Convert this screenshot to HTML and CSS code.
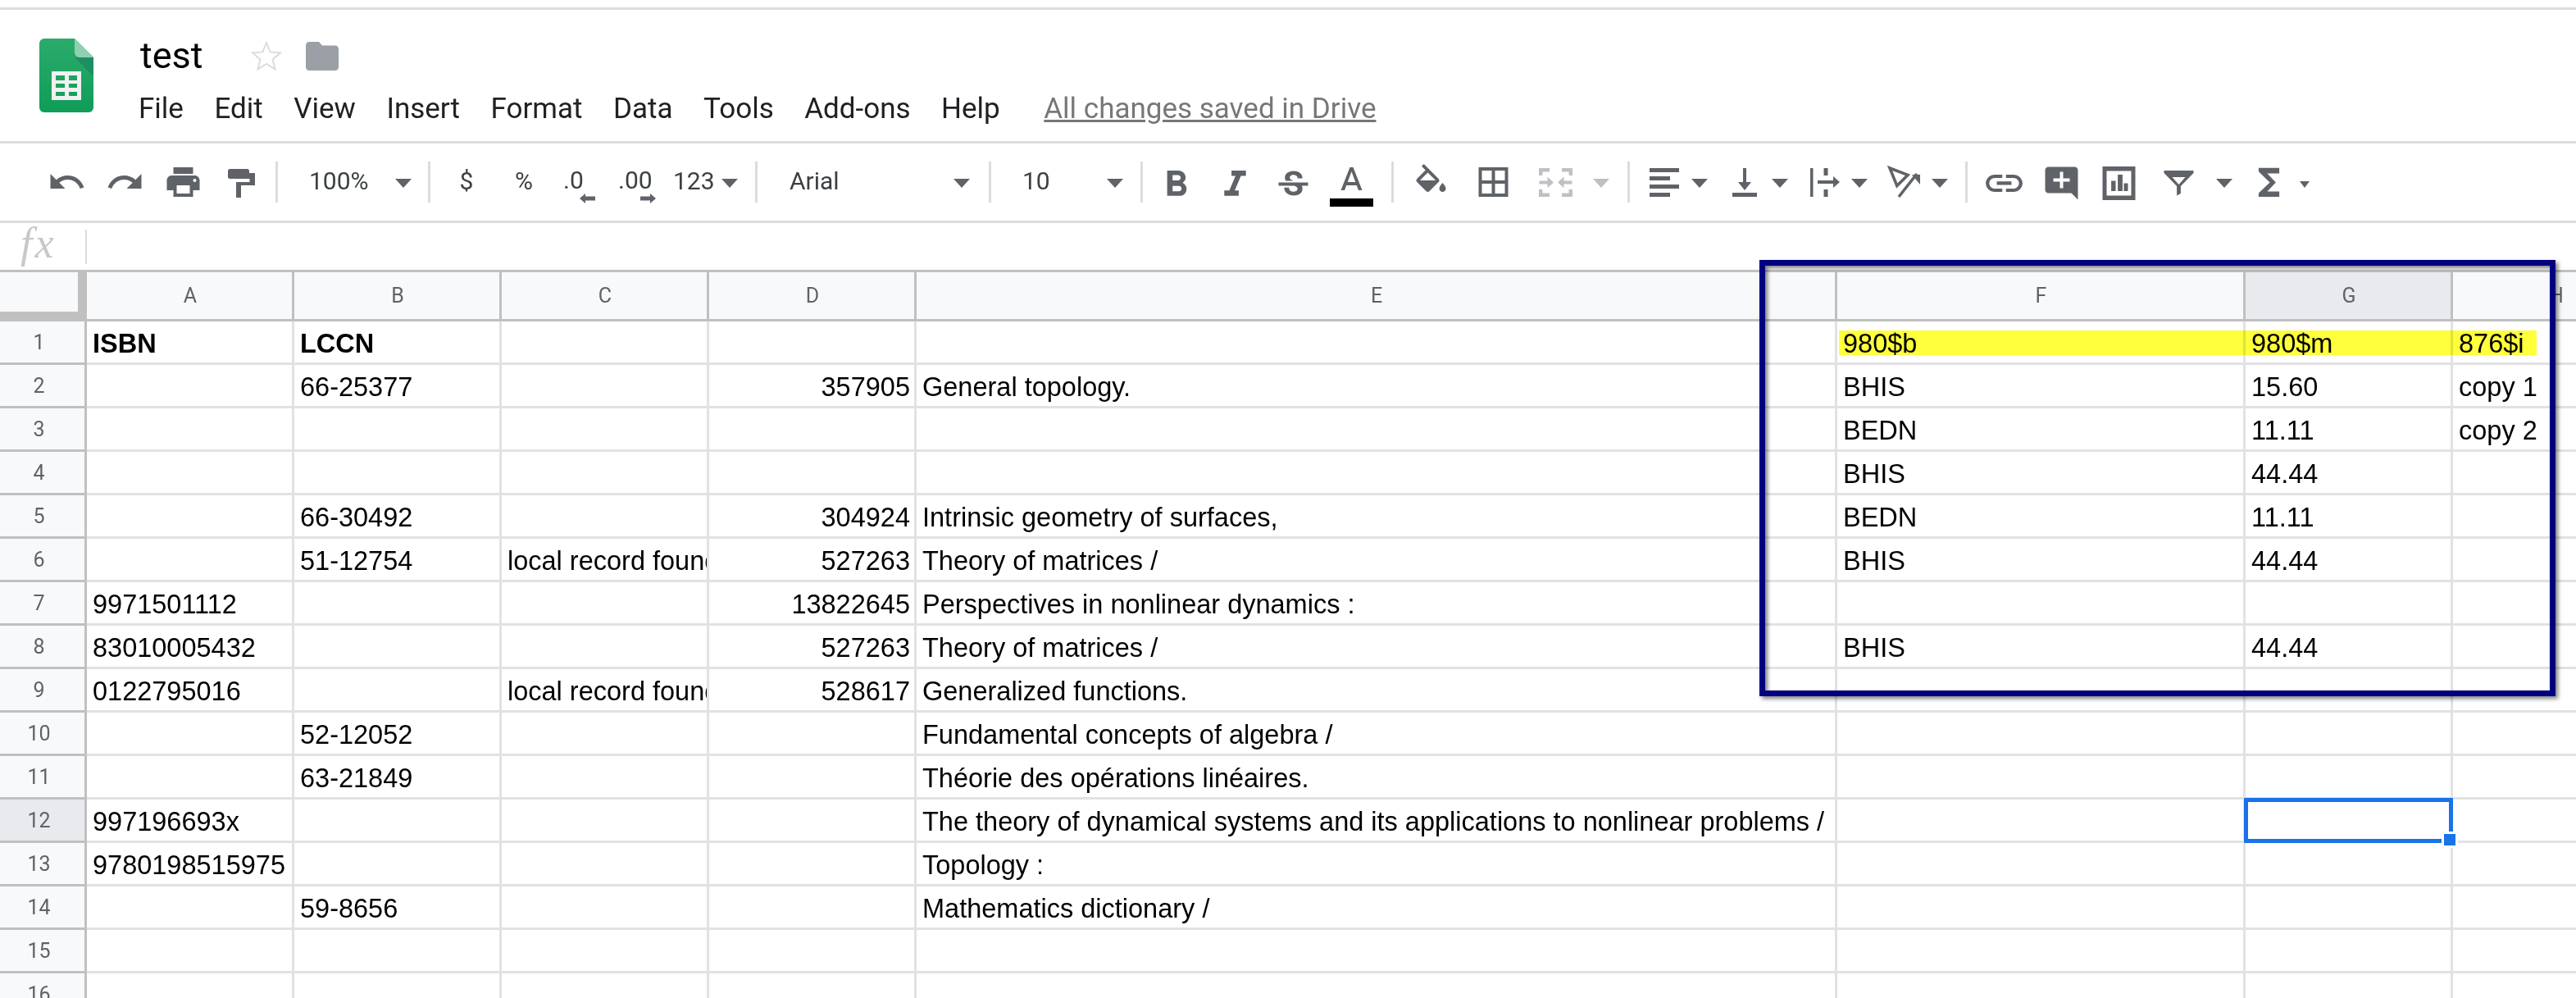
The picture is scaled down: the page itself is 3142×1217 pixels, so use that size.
FILE: index.html
```html
<!DOCTYPE html>
<html lang="en">
<head>
  <meta charset="UTF-8">
  <title>test - Google Sheets</title>
  <link rel="stylesheet" href="styles.css">
</head>
<body>
<div class="page">

  <!-- Title and menus -->
  <header class="docbar">
    <svg class="logo" viewBox="0 0 66 90">
      <defs>
        <linearGradient id="sheetBody" x1="0" y1="0" x2="0" y2="1">
          <stop offset="0" stop-color="#2bab6b"/>
          <stop offset="1" stop-color="#0f9d58"/>
        </linearGradient>
      </defs>
      <path d="M6 0h37l23 23v61a6 6 0 0 1-6 6H6a6 6 0 0 1-6-6V6a6 6 0 0 1 6-6z" fill="url(#sheetBody)"/>
      <path d="M43 23l23 23V23z" fill="#1e8e63"/>
      <path d="M43 0l23 23H49a6 6 0 0 1-6-6z" fill="#8ed1b1"/>
      <path d="M15 40h36v35H15zM20 45v6h11v-6zM36 45v6h10v-6zM20 55v5h11v-5zM36 55v5h10v-5zM20 65v5h11v-5zM36 65v5h10v-5z" fill="#f1f1f1" fill-rule="evenodd"/>
    </svg>
    <div class="docinfo">
      <div class="titlerow">
        <span class="doctitle">test</span>
        <svg class="star" viewBox="0 0 38 38"><path d="M19 3l4.6 11.4 12.4 1-9.4 8 2.9 12L19 29l-10.5 6.4 2.9-12-9.4-8 12.4-1z"/></svg>
        <svg class="folder" viewBox="2 4 20 16" preserveAspectRatio="none"><path d="M10 4H4c-1.1 0-2 .9-2 2v12c0 1.1.9 2 2 2h16c1.1 0 2-.9 2-2V8c0-1.1-.9-2-2-2h-8l-2-2z"/></svg>
      </div>
      <nav class="menubar">
        <span>File</span>
        <span>Edit</span>
        <span>View</span>
        <span>Insert</span>
        <span>Format</span>
        <span>Data</span>
        <span>Tools</span>
        <span>Add-ons</span>
        <span>Help</span>
        <a class="saved">All changes saved in Drive</a>
      </nav>
    </div>
  </header>

  <!-- Toolbar -->
  <div class="toolbar">
    <div class="group g-history">
      <svg class="ic" viewBox="-5.75 -0.5 35.5 25"><path d="M12.5 8c-2.65 0-5.05.99-6.9 2.6L2 7v9h9l-3.62-3.62c1.39-1.16 3.16-1.88 5.12-1.88 3.54 0 6.55 2.31 7.6 5.5l2.37-.78C21.08 11.03 17.15 8 12.5 8z"/></svg>
      <svg class="ic" viewBox="-5.75 -0.5 35.5 25"><path d="M18.4 10.6C16.55 8.99 14.15 8 11.5 8c-4.65 0-8.58 3.03-9.96 7.22L3.9 16c1.05-3.19 4.05-5.5 7.6-5.5 1.95 0 3.73.72 5.12 1.88L13 16h9V7l-3.6 3.6z"/></svg>
      <svg class="ic" viewBox="-5.75 -0.5 35.5 25"><path d="M19 8H5c-1.66 0-3 1.34-3 3v6h4v4h12v-4h4v-6c0-1.66-1.34-3-3-3zm-3 11H8v-5h8v5zm3-7c-.55 0-1-.45-1-1s.45-1 1-1 1 .45 1 1-.45 1-1 1zm-1-9H6v4h12V3z"/></svg>
      <svg class="ic" viewBox="-5.75 -0.5 35.5 25"><path d="M5 4h10.5a1.25 1.25 0 0 1 1.25 1.25V6.5h3.5V14h-8.5v7.5h-3V12H17v-2H5a1.25 1.25 0 0 1-1.25-1.25v-3.5A1.25 1.25 0 0 1 5 4z"/></svg>
    </div>
    <div class="sep"></div>
    <div class="dd dd-zoom"><span>100%</span><i class="caret"></i></div>
    <div class="sep"></div>
    <div class="group g-number">
      <span class="num">$</span>
      <span class="num">%</span>
      <div class="dec dec-less">
        <span>.0</span>
        <svg class="dec-arrow" viewBox="0 0 19 12"><path d="M0 6l7-6v3.5h12v5H7V12z"/></svg>
      </div>
      <div class="dec dec-more">
        <span>.00</span>
        <svg class="dec-arrow" viewBox="0 0 19 12"><path d="M19 6l-7-6v3.5H0v5h12V12z"/></svg>
      </div>
      <span class="more-formats">123</span><i class="caret"></i>
    </div>
    <div class="sep"></div>
    <div class="dd dd-font"><span>Arial</span><i class="caret"></i></div>
    <div class="sep"></div>
    <div class="dd dd-size"><span>10</span><i class="caret"></i></div>
    <div class="sep"></div>
    <div class="group g-text">
      <svg class="ic" viewBox="-5.75 -0.5 35.5 25"><path transform="translate(12 12.7) scale(1.1) translate(-12.4 -11)" d="M15.6 10.79c.97-.67 1.65-1.77 1.65-2.79 0-2.26-1.75-4-4-4H7v14h7.04c2.09 0 3.71-1.7 3.71-3.79 0-1.52-.86-2.82-2.15-3.42zM10 6.5h3c.83 0 1.5.67 1.5 1.5s-.67 1.5-1.5 1.5h-3v-3zm3.5 9H10v-3h3.5c.83 0 1.5.67 1.5 1.5s-.67 1.5-1.5 1.5z"/></svg>
      <svg class="ic" viewBox="-5.75 -0.5 35.5 25"><path transform="translate(12 12.7) scale(1.1) translate(-12 -11)" d="M10 4v3h2.21l-3.42 8H6v3h8v-3h-2.21l3.42-8H18V4z"/></svg>
      <svg class="ic" viewBox="-5.75 -0.5 35.5 25"><path transform="translate(0 2.2)" d="M6.85 7.08C6.85 4.37 9.45 3 12.24 3c1.64 0 3 .49 3.9 1.28.77.65 1.46 1.73 1.46 3.24h-3.01c0-.31-.05-.59-.15-.85-.29-.86-1.2-1.28-2.25-1.28-1.86 0-2.34 1.02-2.34 1.7 0 .48.25.88.74 1.21.38.25.77.48 1.41.7H7.39c-.21-.34-.54-.89-.54-1.92zM21 12v-2H3v2h9.62c1.15.45 1.96.75 1.96 1.97 0 1-.81 1.67-2.28 1.67-1.54 0-2.93-.54-2.93-2.51H6.4c0 .55.08 1.13.24 1.58.81 2.29 3.17 3.3 5.67 3.3 2.39 0 5.26-.93 5.26-4.04 0-.65-.1-1.27-.4-1.97H21z"/></svg>
      <svg class="ic" viewBox="-5.75 -0.5 35.5 25"><path d="M11 3L5.5 17h2.25l1.12-3h6.25l1.12 3h2.25L13 3h-2zm-1.38 9L12 5.67 14.38 12H9.62z"/><rect class="black" x="-1.25" y="22" width="26.5" height="5"/></svg>
    </div>
    <div class="sep"></div>
    <div class="group g-cell">
      <svg class="ic" viewBox="-5.75 -0.5 35.5 25"><path transform="translate(0 1)" d="M16.56 8.94L7.62 0 6.21 1.41l2.38 2.38-5.15 5.15c-.59.59-.59 1.54 0 2.12l5.5 5.5c.29.29.68.44 1.06.44s.77-.15 1.06-.44l5.5-5.5c.59-.58.59-1.53 0-2.12zM5.21 10L10 5.21 14.79 10H5.21zM19 11.5s-2 2.17-2 3.5c0 1.1.9 2 2 2s2-.9 2-2c0-1.33-2-3.5-2-3.5z"/></svg>
      <svg class="ic spaced" viewBox="-5.75 -0.5 35.5 25"><path d="M3 3v18h18V3H3zm8 16H5v-6h6v6zm0-8H5V5h6v6zm8 8h-6v-6h6v6zm0-8h-6V5h6v6z"/></svg>
      <svg class="ic spaced off" viewBox="-5.75 -0.5 35.5 25"><path d="M1.75 3.5h6.5v2.2h-4.3v2.3h-2.2zM22.25 3.5h-6.5v2.2h4.3v2.3h2.2zM1.75 21h6.5v-2.2h-4.3v-2.3h-2.2zM22.25 21h-6.5v-2.2h4.3v-2.3h2.2zM2 11.2h5V8.8l3.7 3.4L7 15.6v-2.4H2zM22 11.2h-5V8.8l-3.7 3.4 3.7 3.4v-2.4h5z"/></svg>
      <i class="caret caret-off"></i>
    </div>
    <div class="sep"></div>
    <div class="group g-align">
      <div class="drop">
        <svg class="ic-drop" viewBox="-3 -0.5 30 25"><path d="M3 3.5h18V6H3zM3 8.5h12.5V11H3zM3 13.5h18V16H3zM3 18.5h12.5V21H3z"/></svg><i class="caret"></i>
      </div>
      <div class="drop">
        <svg class="ic-drop" viewBox="-3 -0.5 30 25"><path d="M11 3.5h2V12h3l-4 5-4-5h3zM4.5 18.5h15V21h-15z"/></svg><i class="caret"></i>
      </div>
      <div class="drop">
        <svg class="ic-drop" viewBox="-3 -0.5 30 25"><path d="M3.5 3.5h1.75V21H3.5zM11.75 3.5h2.5V8h-2.5zM11.75 16.5h2.5V21h-2.5zM8 11h9.5V8.5L21.5 12l-4 3.5V13H8z"/></svg><i class="caret"></i>
      </div>
      <div class="drop">
        <svg class="ic-drop" viewBox="-3 -0.5 30 25"><path class="outline" d="M3 3.5l11 4.2-6.6 6.6z"/><path class="outline" d="M8.5 21l11-14"/><path d="M16.5 7.5H21.5v6z"/></svg><i class="caret"></i>
      </div>
    </div>
    <div class="sep"></div>
    <div class="group g-insert">
      <svg class="ic" viewBox="-5.75 -0.5 35.5 25"><path transform="translate(12 12.7) scale(1.12 1.05) translate(-12 -12)" d="M3.9 12c0-1.71 1.39-3.1 3.1-3.1h4V7H7c-2.76 0-5 2.24-5 5s2.24 5 5 5h4v-1.9H7c-1.71 0-3.1-1.39-3.1-3.1zM8 13h8v-2H8v2zm9-6h-4v1.9h4c1.71 0 3.1 1.39 3.1 3.1s-1.39 3.1-3.1 3.1h-4V17h4c2.76 0 5-2.24 5-5s-2.24-5-5-5z"/></svg>
      <svg class="ic" viewBox="-5.75 -0.5 35.5 25"><path transform="translate(-.5 .7)" d="M21.99 4c0-1.1-.89-2-1.99-2H4c-1.1 0-2 .9-2 2v12c0 1.1.9 2 2 2h14l4 4-.01-18zM17 11h-4v4h-2v-4H7V9h4V5h2v4h4v2z"/></svg>
      <svg class="ic" viewBox="-5.75 -0.5 35.5 25"><path fill-rule="evenodd" transform="translate(-1 .7)" d="M2 1.75h20v20.5H2zM4.5 4.5v15h15v-15zM7.3 10.6H10v6.15H7.3zM11.3 6.75h2.9v10h-2.9zM15 12h2.5v4.75H15z"/></svg>
      <svg class="ic" viewBox="-5.75 -0.5 35.5 25"><path fill-rule="evenodd" d="M3 5h18v1.5l-7.8 8V19l-2.4 1.2v-5.7L3 6.5zM8 9h8l-4 4.5z"/></svg>
      <i class="caret caret-filter"></i>
      <svg class="ic sigma" viewBox="-5.75 -0.5 35.5 25"><path transform="translate(12 12.2) scale(1.05 1.1) translate(-12 -12)" d="M18 4H6v2l6.5 6L6 18v2h12v-3h-7l5-5-5-5h7z"/></svg>
      <i class="caret caret-small"></i>
    </div>
  </div>

  <!-- Formula bar -->
  <div class="formulabar">
    <span class="fx">fx</span>
    <div class="fx-sep"></div>
  </div>

  <!-- Grid -->
  <div class="sheet">
    <table class="grid">
      <colgroup>
        <col class="c-head"><col class="c-std"><col class="c-std"><col class="c-std"><col class="c-std">
        <col class="c-e"><col class="c-f"><col class="c-std"><col class="c-std">
      </colgroup>
      <thead>
        <tr>
          <th class="corner"></th><th>A</th><th>B</th><th>C</th><th>D</th><th>E</th><th>F</th><th class="on">G</th><th>H</th>
        </tr>
      </thead>
      <tbody>
        <tr><th>1</th><td class="b">ISBN</td><td class="b">LCCN</td><td></td><td></td><td></td><td>980$b</td><td>980$m</td><td>876$i</td></tr>
        <tr><th>2</th><td></td><td>66-25377</td><td></td><td class="r">357905</td><td>General topology.</td><td>BHIS</td><td>15.60</td><td>copy 1</td></tr>
        <tr><th>3</th><td></td><td></td><td></td><td></td><td></td><td>BEDN</td><td>11.11</td><td>copy 2</td></tr>
        <tr><th>4</th><td></td><td></td><td></td><td></td><td></td><td>BHIS</td><td>44.44</td><td></td></tr>
        <tr><th>5</th><td></td><td>66-30492</td><td></td><td class="r">304924</td><td>Intrinsic geometry of surfaces,</td><td>BEDN</td><td>11.11</td><td></td></tr>
        <tr><th>6</th><td></td><td>51-12754</td><td>local record found</td><td class="r">527263</td><td>Theory of matrices /</td><td>BHIS</td><td>44.44</td><td></td></tr>
        <tr><th>7</th><td>9971501112</td><td></td><td></td><td class="r">13822645</td><td>Perspectives in nonlinear dynamics :</td><td></td><td></td><td></td></tr>
        <tr><th>8</th><td>83010005432</td><td></td><td></td><td class="r">527263</td><td>Theory of matrices /</td><td>BHIS</td><td>44.44</td><td></td></tr>
        <tr><th>9</th><td>0122795016</td><td></td><td>local record found</td><td class="r">528617</td><td>Generalized functions.</td><td></td><td></td><td></td></tr>
        <tr><th>10</th><td></td><td>52-12052</td><td></td><td></td><td>Fundamental concepts of algebra /</td><td></td><td></td><td></td></tr>
        <tr><th>11</th><td></td><td>63-21849</td><td></td><td></td><td>Théorie des opérations linéaires.</td><td></td><td></td><td></td></tr>
        <tr><th class="on">12</th><td>997196693x</td><td></td><td></td><td></td><td>The theory of dynamical systems and its applications to nonlinear problems /</td><td></td><td></td><td></td></tr>
        <tr><th>13</th><td>9780198515975</td><td></td><td></td><td></td><td>Topology :</td><td></td><td></td><td></td></tr>
        <tr><th>14</th><td></td><td>59-8656</td><td></td><td></td><td>Mathematics dictionary /</td><td></td><td></td><td></td></tr>
        <tr><th>15</th><td></td><td></td><td></td><td></td><td></td><td></td><td></td><td></td></tr>
        <tr><th>16</th><td></td><td></td><td></td><td></td><td></td><td></td><td></td><td></td></tr>
      </tbody>
    </table>
  </div>

  <!-- Things lying over the grid -->
  <div class="highlight"></div>
  <div class="selection"><i class="handle"></i></div>
  <div class="callout"></div>

</div>
</body>
</html>
```

FILE: styles.css
```css
/* Base */
html, body {
  margin: 0;
  height: 100%;
  overflow: hidden;
  background: #fff;
}
.page {
  position: relative;
  height: 1217px;
  overflow: hidden;
  padding-top: 9px;
  box-sizing: border-box;
  font-family: Roboto, sans-serif;
}

/* Title and menus */
.docbar {
  display: flex;
  height: 160px;
  box-sizing: content-box;
  border-top: 3px solid #dadce0;
  padding-left: 48px;
}
.logo {
  width: 66px;
  height: 90px;
  margin-top: 35px;
  flex: none;
}
.docinfo {
  margin-left: 55px;
  padding-top: 31px;
}
.titlerow {
  display: flex;
  align-items: center;
  height: 50px;
}
.doctitle {
  font-size: 45px;
  line-height: 50px;
  color: #000;
  margin-left: 2px;
}
.star {
  width: 38px;
  height: 38px;
  margin-left: 58px;
  fill: none;
  stroke: #dadce0;
  stroke-width: 2;
}
.folder {
  width: 40px;
  height: 35px;
  margin-left: 29px;
  fill: #9aa0a6;
}
.menubar {
  display: flex;
  gap: 37.5px;
  margin-top: 20px;
  font-size: 35px;
  line-height: 40px;
  color: #202124;
  white-space: nowrap;
}
.saved {
  margin-left: 16px;
  color: #777;
  text-decoration: underline;
}

/* Toolbar */
.toolbar {
  display: flex;
  align-items: center;
  height: 94px;
  border-top: 3px solid #dadce0;
  border-bottom: 3px solid #dadce0;
  padding-left: 46px;
  color: #3c4043;
  font-size: 30px;
}
.group {
  display: flex;
  align-items: center;
  height: 94px;
  box-sizing: border-box;
  flex: none;
}
.g-history { width: 290px; }
.g-number { width: 396px; padding-left: 9px; }
.g-text { width: 303px; padding-left: 6px; }
.g-cell { width: 285px; padding-left: 10px; }
.g-align { width: 409px; padding-left: 12px; }
.g-insert { padding-left: 9px; }
.sep {
  width: 3px;
  height: 50px;
  background: #dadce0;
  flex: none;
}
.ic {
  width: 71px;
  height: 50px;
  flex: none;
  fill: #5f6368;
  overflow: visible;
}
.ic.spaced { margin-left: 5px; }
.ic.off { fill: #bdc1c6; }
.ic .black { fill: #000; }
.ic-drop {
  width: 60px;
  height: 50px;
  flex: none;
  fill: #5f6368;
  overflow: visible;
}
.ic-drop .outline {
  fill: none;
  stroke: #5f6368;
  stroke-width: 1.8;
}
.drop {
  display: flex;
  align-items: center;
  width: 97.5px;
  flex: none;
}
.caret {
  width: 0;
  height: 0;
  margin-top: 3px;
  margin-left: 3px;
  border-left: 10px solid transparent;
  border-right: 10px solid transparent;
  border-top: 11px solid #5f6368;
  flex: none;
}
.g-number .caret { margin-left: 8px; }
.g-cell .caret { margin-left: 10px; }
.caret-off { border-top-color: #bdc1c6; }
.g-insert .caret-filter { margin-left: 10px; }
.sigma { margin-left: 9px; }
.g-insert .caret-small {
  margin-left: 2px;
  margin-top: 6px;
  border-left-width: 6px;
  border-right-width: 6px;
  border-top-width: 8px;
}
.dd {
  display: flex;
  justify-content: space-between;
  align-items: center;
  box-sizing: border-box;
  flex: none;
}
.dd span { margin-bottom: 4px; }
.dd .caret { margin-left: 0; }
.dd-zoom { width: 183px; padding: 0 20px 0 38px; }
.dd-font { width: 282px; padding: 0 23px 0 39px; }
.dd-size { width: 182px; padding: 0 21px 0 38px; }
.num {
  width: 70px;
  margin-bottom: 4px;
  text-align: center;
  color: #3c4043;
  flex: none;
}
.dec {
  display: flex;
  flex-direction: column;
  align-items: flex-start;
  align-self: flex-start;
  width: 70px;
  margin-top: 31px;
  box-sizing: border-box;
  line-height: 28px;
  flex: none;
}
.dec-less { padding-left: 13px; }
.dec-more { padding-left: 10px; }
.dec-arrow {
  width: 19px;
  height: 12px;
  margin-top: 2px;
  fill: #5f6368;
}
.dec-less .dec-arrow { margin-left: 20px; }
.dec-more .dec-arrow { margin-left: 27px; }
.more-formats { margin-left: 7px; margin-bottom: 4px; }

/* Formula bar */
.formulabar {
  display: flex;
  align-items: center;
  height: 57px;
  padding-left: 25px;
}
.fx {
  width: 79px;
  margin-bottom: 8px;
  font-family: "Liberation Serif", serif;
  font-style: italic;
  font-size: 52px;
  line-height: 48px;
  letter-spacing: 3px;
  color: #c8c8c8;
}
.fx-sep {
  width: 2px;
  height: 42px;
  background: #dadce0;
}

/* Grid */
.sheet {
  border-top: 3px solid #c0c0c0;
}
.grid {
  table-layout: fixed;
  width: 3245px;
  border-collapse: separate;
  border-spacing: 0;
  font-family: "Liberation Sans", Arial, sans-serif;
  font-size: 32.5px;
  color: #000;
}
.c-head { width: 106px; }
.c-std { width: 253px; }
.c-e { width: 1123px; }
.c-f { width: 498px; }
.grid td {
  height: 53px;
  box-sizing: border-box;
  border-right: 3px solid #e2e2e2;
  border-bottom: 3px solid #e2e2e2;
  padding: 0 5px 4px 7px;
  line-height: 37px;
  vertical-align: bottom;
  white-space: nowrap;
  overflow: hidden;
}
.grid td.b { font-weight: bold; }
.grid td.r { text-align: right; }
.grid th {
  height: 53px;
  box-sizing: border-box;
  background: #f8f9fa;
  border-right: 3px solid #c0c0c0;
  border-bottom: 3px solid #c0c0c0;
  padding: 0;
  font-family: Roboto, sans-serif;
  font-weight: 400;
  font-size: 25px;
  color: #5f6368;
  text-align: center;
  vertical-align: middle;
  overflow: hidden;
}
.grid tbody th { padding-right: 8px; }
.grid thead th { height: 60px; padding-left: 2px; }
.grid thead th.corner {
  padding-left: 0;
  border-right-width: 11px;
  border-bottom-width: 12px;
}
.grid th.on { background: #e8eaed; }

/* Overlays */
.highlight {
  position: absolute;
  left: 2243px;
  top: 403px;
  width: 851px;
  height: 30px;
  background: #ffff3b;
  mix-blend-mode: multiply;
}
.selection {
  position: absolute;
  left: 2737px;
  top: 973px;
  width: 255px;
  height: 55px;
  box-sizing: border-box;
  border: 5px solid #1a73e8;
}
.handle {
  position: absolute;
  right: -8px;
  bottom: -8px;
  width: 14px;
  height: 14px;
  background: #1a73e8;
  box-shadow: 0 0 0 3px #fff;
}
.callout {
  position: absolute;
  left: 2146px;
  top: 317px;
  width: 971px;
  height: 532px;
  box-sizing: border-box;
  border: 7px solid #000080;
  box-shadow: 3px 3px 5px rgba(0, 0, 0, 0.5), inset 3px 3px 5px rgba(0, 0, 0, 0.5);
}
```
